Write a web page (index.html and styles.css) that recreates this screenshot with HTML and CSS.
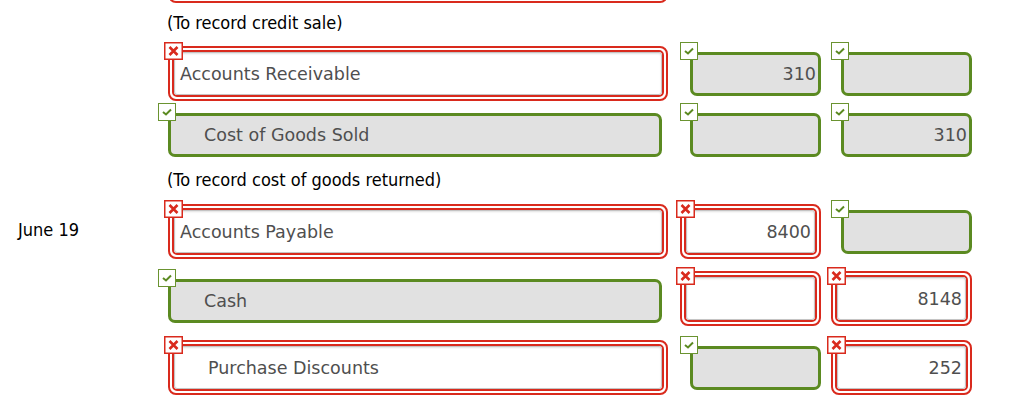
FILE: index.html
```html
<!DOCTYPE html>
<html lang="en">
<head>
<meta charset="utf-8">
<title>Journal entries</title>
<link rel="stylesheet" href="styles.css">
</head>
<body>
<div class="sheet">

  <div class="row prev">
    <div class="date"></div>
    <div class="cell acct">
      <div class="field err"><div class="ring"><div class="inp"></div></div></div>
    </div>
  </div>

  <div class="note">(To record credit sale)</div>

  <div class="row r-ar">
    <div class="date"></div>
    <div class="cell acct">
      <div class="field err">
        <svg class="mark" width="19" height="18" viewBox="0 0 19 18"><rect x="0.75" y="0.75" width="17.5" height="16.5" fill="#fff" stroke="#d92a1d" stroke-width="1.5"/><path d="M5.5 5 L13.5 13 M13.5 5 L5.5 13" stroke="#d92a1d" stroke-width="2.6"/></svg>
        <div class="ring"><div class="inp">Accounts Receivable</div></div>
      </div>
    </div>
    <div class="cell amt">
      <div class="field ok">
        <svg class="mark" width="18" height="18" viewBox="0 0 18 18"><rect x="0.5" y="0.5" width="17" height="17" fill="#fff" stroke="#6a9330"/><path d="M5 9 L8 11.5 L13 6.5" fill="none" stroke="#5b8a21" stroke-width="2"/></svg>
        <div class="inp num">310</div>
      </div>
    </div>
    <div class="cell amt">
      <div class="field ok">
        <svg class="mark" width="18" height="18" viewBox="0 0 18 18"><rect x="0.5" y="0.5" width="17" height="17" fill="#fff" stroke="#6a9330"/><path d="M5 9 L8 11.5 L13 6.5" fill="none" stroke="#5b8a21" stroke-width="2"/></svg>
        <div class="inp num"></div>
      </div>
    </div>
  </div>

  <div class="row r-cogs">
    <div class="date"></div>
    <div class="cell acct">
      <div class="field ok">
        <svg class="mark" width="18" height="18" viewBox="0 0 18 18"><rect x="0.5" y="0.5" width="17" height="17" fill="#fff" stroke="#6a9330"/><path d="M5 9 L8 11.5 L13 6.5" fill="none" stroke="#5b8a21" stroke-width="2"/></svg>
        <div class="inp indent">Cost of Goods Sold</div>
      </div>
    </div>
    <div class="cell amt">
      <div class="field ok">
        <svg class="mark" width="18" height="18" viewBox="0 0 18 18"><rect x="0.5" y="0.5" width="17" height="17" fill="#fff" stroke="#6a9330"/><path d="M5 9 L8 11.5 L13 6.5" fill="none" stroke="#5b8a21" stroke-width="2"/></svg>
        <div class="inp num"></div>
      </div>
    </div>
    <div class="cell amt">
      <div class="field ok">
        <svg class="mark" width="18" height="18" viewBox="0 0 18 18"><rect x="0.5" y="0.5" width="17" height="17" fill="#fff" stroke="#6a9330"/><path d="M5 9 L8 11.5 L13 6.5" fill="none" stroke="#5b8a21" stroke-width="2"/></svg>
        <div class="inp num">310</div>
      </div>
    </div>
  </div>

  <div class="note note2">(To record cost of goods returned)</div>

  <div class="row r-ap">
    <div class="date">June 19</div>
    <div class="cell acct">
      <div class="field err">
        <svg class="mark" width="19" height="18" viewBox="0 0 19 18"><rect x="0.75" y="0.75" width="17.5" height="16.5" fill="#fff" stroke="#d92a1d" stroke-width="1.5"/><path d="M5.5 5 L13.5 13 M13.5 5 L5.5 13" stroke="#d92a1d" stroke-width="2.6"/></svg>
        <div class="ring"><div class="inp">Accounts Payable</div></div>
      </div>
    </div>
    <div class="cell amt">
      <div class="field err">
        <svg class="mark" width="19" height="18" viewBox="0 0 19 18"><rect x="0.75" y="0.75" width="17.5" height="16.5" fill="#fff" stroke="#d92a1d" stroke-width="1.5"/><path d="M5.5 5 L13.5 13 M13.5 5 L5.5 13" stroke="#d92a1d" stroke-width="2.6"/></svg>
        <div class="ring"><div class="inp num">8400</div></div>
      </div>
    </div>
    <div class="cell amt">
      <div class="field ok">
        <svg class="mark" width="18" height="18" viewBox="0 0 18 18"><rect x="0.5" y="0.5" width="17" height="17" fill="#fff" stroke="#6a9330"/><path d="M5 9 L8 11.5 L13 6.5" fill="none" stroke="#5b8a21" stroke-width="2"/></svg>
        <div class="inp num"></div>
      </div>
    </div>
  </div>

  <div class="row r-cash">
    <div class="date"></div>
    <div class="cell acct">
      <div class="field ok">
        <svg class="mark" width="18" height="18" viewBox="0 0 18 18"><rect x="0.5" y="0.5" width="17" height="17" fill="#fff" stroke="#6a9330"/><path d="M5 9 L8 11.5 L13 6.5" fill="none" stroke="#5b8a21" stroke-width="2"/></svg>
        <div class="inp indent">Cash</div>
      </div>
    </div>
    <div class="cell amt">
      <div class="field err">
        <svg class="mark" width="19" height="18" viewBox="0 0 19 18"><rect x="0.75" y="0.75" width="17.5" height="16.5" fill="#fff" stroke="#d92a1d" stroke-width="1.5"/><path d="M5.5 5 L13.5 13 M13.5 5 L5.5 13" stroke="#d92a1d" stroke-width="2.6"/></svg>
        <div class="ring"><div class="inp num"></div></div>
      </div>
    </div>
    <div class="cell amt">
      <div class="field err">
        <svg class="mark" width="19" height="18" viewBox="0 0 19 18"><rect x="0.75" y="0.75" width="17.5" height="16.5" fill="#fff" stroke="#d92a1d" stroke-width="1.5"/><path d="M5.5 5 L13.5 13 M13.5 5 L5.5 13" stroke="#d92a1d" stroke-width="2.6"/></svg>
        <div class="ring"><div class="inp num">8148</div></div>
      </div>
    </div>
  </div>

  <div class="row r-pd">
    <div class="date"></div>
    <div class="cell acct">
      <div class="field err">
        <svg class="mark" width="19" height="18" viewBox="0 0 19 18"><rect x="0.75" y="0.75" width="17.5" height="16.5" fill="#fff" stroke="#d92a1d" stroke-width="1.5"/><path d="M5.5 5 L13.5 13 M13.5 5 L5.5 13" stroke="#d92a1d" stroke-width="2.6"/></svg>
        <div class="ring"><div class="inp indent">Purchase Discounts</div></div>
      </div>
    </div>
    <div class="cell amt">
      <div class="field ok">
        <svg class="mark" width="18" height="18" viewBox="0 0 18 18"><rect x="0.5" y="0.5" width="17" height="17" fill="#fff" stroke="#6a9330"/><path d="M5 9 L8 11.5 L13 6.5" fill="none" stroke="#5b8a21" stroke-width="2"/></svg>
        <div class="inp num"></div>
      </div>
    </div>
    <div class="cell amt">
      <div class="field err">
        <svg class="mark" width="19" height="18" viewBox="0 0 19 18"><rect x="0.75" y="0.75" width="17.5" height="16.5" fill="#fff" stroke="#d92a1d" stroke-width="1.5"/><path d="M5.5 5 L13.5 13 M13.5 5 L5.5 13" stroke="#d92a1d" stroke-width="2.6"/></svg>
        <div class="ring"><div class="inp num">252</div></div>
      </div>
    </div>
  </div>

</div>
</body>
</html>
```

FILE: styles.css
```css
* { box-sizing: border-box; }

html, body {
  margin: 0;
  padding: 0;
  background: #fff;
}

body {
  font-family: "DejaVu Sans", Verdana, sans-serif;
  color: #000;
  overflow: hidden;
}

.sheet {
  width: 1024px;
  height: 408px;
  overflow: hidden;
}

.row {
  display: grid;
  grid-template-columns: 158px 518px 151px 197px;
  align-items: start;
}

.prev { height: 3px; }
.prev .field.err { margin-top: -52px; }

.r-ar { height: 61px; }
.r-cogs { height: 57px; }
.r-ap { height: 67px; }
.r-cash { height: 69px; }
.r-pd { height: 72px; }

.note {
  height: 39px;
  line-height: 39px;
  padding-left: 167px;
  font-family: "DejaVu Sans Condensed", "DejaVu Sans", sans-serif;
  font-size: 18px;
  color: #000;
}

.note2 {
  height: 40px;
  line-height: 40px;
}

.date {
  padding-left: 18px;
  margin-top: 20px;
  line-height: 20px;
  font-family: "DejaVu Sans Condensed", "DejaVu Sans", sans-serif;
  font-size: 18px;
  color: #000;
}

.field {
  position: relative;
  background: #fff;
}

.mark {
  position: absolute;
  display: block;
  z-index: 2;
}

/* incorrect answer: double red ring */
.field.err {
  height: 55px;
  margin-top: 4px;
  border: 2px solid #d92a1d;
  border-radius: 8px;
  padding: 2px;
}
.field.err .mark { left: -6px; top: -6px; }

.ring {
  height: 100%;
  border: 2px solid #d92a1d;
  border-radius: 5px;
  background: #fff;
}

.field.err .inp {
  height: 100%;
  border: 1px solid #c4c4c4;
  border-radius: 3px;
  box-shadow: inset 0 1px 2px rgba(0, 0, 0, 0.12);
  background: #fff;
  padding: 0 3px 0 5px;
}

/* correct answer: green frame, grey fill */
.field.ok {
  height: 44px;
  margin-top: 10px;
  border: 3px solid #5b8a21;
  border-radius: 7px;
  background: #e1e1e1;
}
.field.ok .mark { left: -13px; top: -13px; }

.field.ok .inp {
  height: 100%;
  padding: 0 2px 0 6px;
}

.inp {
  display: flex;
  align-items: center;
  font-family: "DejaVu Sans", Verdana, sans-serif;
  font-size: 17.5px;
  color: #4f4f4f;
  white-space: nowrap;
}

.inp.num { justify-content: flex-end; }
.field.err .inp.indent { padding-left: 33px; }
.field.ok .inp.indent { padding-left: 33px; }

/* column widths */
.acct .field { margin-left: 10px; }
.acct .field.err { width: 500px; }
.acct .field.ok { width: 494px; }

.amt .field.err { margin-left: 4px; width: 141px; }
.amt .field.ok { margin-left: 14px; width: 131px; }

.r-cash .field.ok { margin-top: 12px; }
```
